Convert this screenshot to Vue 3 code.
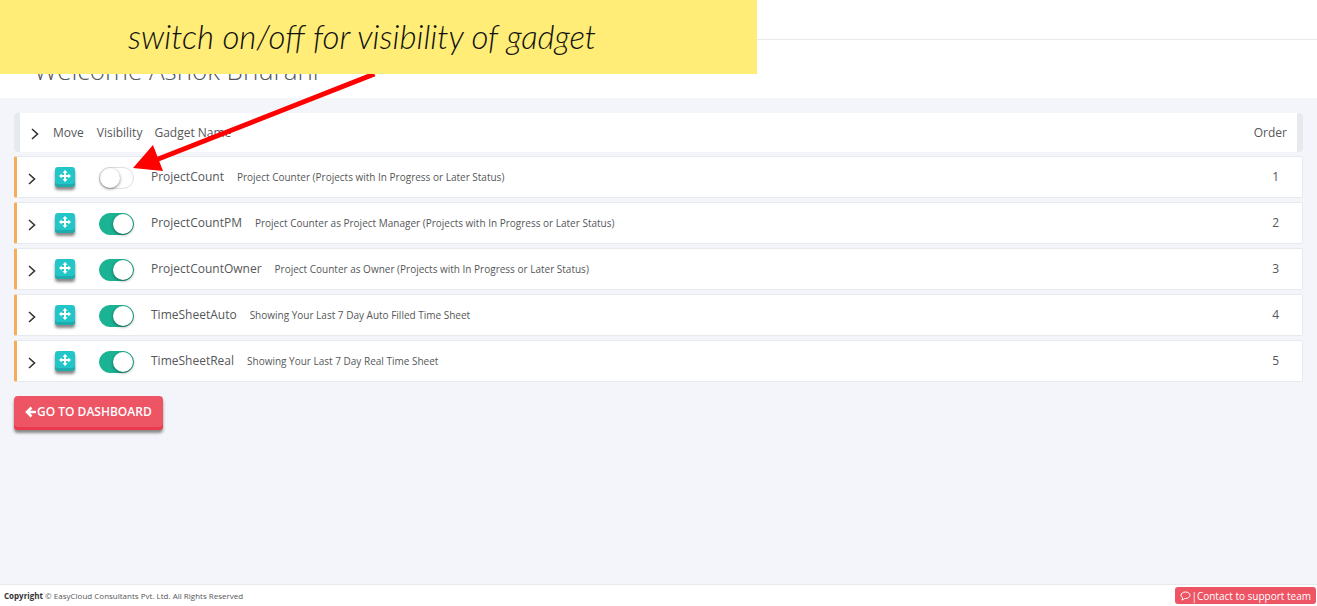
<script setup>
import { reactive } from 'vue'

const gadgets = reactive([
  { name: 'ProjectCount', about: 'Project Counter (Projects with In Progress or Later Status)', visible: false },
  { name: 'ProjectCountPM', about: 'Project Counter as Project Manager (Projects with In Progress or Later Status)', visible: true },
  { name: 'ProjectCountOwner', about: 'Project Counter as Owner (Projects with In Progress or Later Status)', visible: true },
  { name: 'TimeSheetAuto', about: 'Showing Your Last 7 Day Auto Filled Time Sheet', visible: true },
  { name: 'TimeSheetReal', about: 'Showing Your Last 7 Day Real Time Sheet', visible: true }
])
</script>

<template>
  <div class="page">
    <div class="topbar"></div>
    <header class="heading">
      <h1>Welcome Ashok Bhurani</h1>
    </header>

    <main class="content">
      <div class="list-head">
        <svg class="chevron" viewBox="0 0 8 12"><path d="M1 1l5.500 5L1 11" /></svg>
        <span class="h-move">Move</span>
        <span class="h-vis">Visibility</span>
        <span>Gadget Name</span>
        <span class="h-order">Order</span>
      </div>

      <ol class="list">
        <li v-for="(g, i) in gadgets" :key="g.name" class="row">
          <svg class="chevron" viewBox="0 0 8 12"><path d="M1 1l5.500 5L1 11" /></svg>
          <button class="move" type="button" :aria-label="'Move ' + g.name">
            <svg viewBox="0 0 12 12">
              <path d="M6 0l2.600 2.700H7v2.300h2.300V3.400L12 6 9.300 8.600V7H7v2.300h1.600L6 12 3.400 9.300H5V7H2.700v1.600L0 6l2.700-2.600V5H5V2.700H3.400z" />
            </svg>
          </button>
          <input v-model="g.visible" class="switch" type="checkbox" :aria-label="'Visibility of ' + g.name" />
          <span class="name">{{ g.name }}</span>
          <small class="about">{{ g.about }}</small>
          <span class="order">{{ i + 1 }}</span>
        </li>
      </ol>

      <button class="back" type="button">
        <svg viewBox="0 0 12 12"><path d="M6.500 1.500L2 6l4.500 4.500M2.500 6H11" /></svg>GO TO DASHBOARD
      </button>
    </main>

    <footer class="footer">
      <span><strong>Copyright</strong> © EasyCloud Consultants Pvt. Ltd. All Rights Reserved</span>
      <a class="support" href="#">
        <svg viewBox="0 0 11 10"><path d="M5.500 1C8 1 10 2.400 10 4.300S8 7.500 5.500 7.500L4.800 7.400C4 8.400 3 8.900 1.800 9c.6-.5.9-1.200.9-2.200C1.600 6.200 1 5.300 1 4.300 1 2.400 3 1 5.500 1z" /></svg>|Contact to support team
      </a>
    </footer>

    <div class="note">switch on/off for visibility of gadget</div>
    <svg class="arrow" viewBox="0 0 244 98">
      <path class="shaft" d="M241.500 0L24 85.500" />
      <path class="head" d="M0 94l20-23 10 26z" />
    </svg>
  </div>
</template>

<style>
body {
  background: #f3f5fa;
}
</style>

<style scoped>
.page {
  position: relative;
  display: flex;
  flex-direction: column;
  min-height: 100vh;
  background: #f3f5fa;
  color: #555759;
  font: 12px/20px "Open Sans", "Noto Sans", sans-serif;
}
.topbar {
  height: 39px;
  background: #fff;
  border-bottom: 1px solid #e7eaec;
}
.heading {
  padding: 14px 34px 12px;
  background: #fff;
}
h1 {
  margin: 0;
  font-size: 26px;
  line-height: 32px;
  font-weight: 300;
}
.content {
  flex: 1;
  padding: 15px 14px;
}
.list-head,
.row {
  display: flex;
  align-items: center;
  box-sizing: border-box;
  background: #fff;
}
.list-head {
  height: 39px;
  padding: 0 10px 0 11px;
  border: solid #e7eaec;
  border-width: 0 6px;
  border-radius: 4px;
}
.chevron {
  flex: none;
  width: 8px;
  height: 12px;
  margin-top: 3px;
  fill: none;
  stroke: #333;
  stroke-width: 1.6;
}
.h-move {
  margin-left: 14px;
}
.h-vis {
  margin: 0 12px 0 13px;
}
.h-order,
.order {
  margin-left: auto;
}
.list {
  display: grid;
  gap: 4px;
  margin: 4px 0 14px;
  padding: 0;
  list-style: none;
}
.row {
  height: 42px;
  padding: 0 23px 0 11px;
  border: 1px solid #e7eaec;
  border-left: 3px solid #f8ac59;
  border-radius: 2px;
}
.move {
  flex: none;
  display: flex;
  justify-content: center;
  width: 20px;
  height: 20px;
  margin: 0 24px 0 19px;
  padding: 3px 0;
  border: 0;
  border-radius: 3px;
  background: #23c6c8;
  box-shadow: inset 0 -3px #1eacae, 0 3px 3px #888;
}
.move svg {
  width: 12px;
  height: 12px;
  fill: #fff;
}
.switch {
  flex: none;
  appearance: none;
  display: flex;
  box-sizing: border-box;
  width: 35px;
  height: 22px;
  margin: 2px 17px 0 0;
  border: 1px solid #dfdfdf;
  border-radius: 20px;
  background: #fff;
}
.switch::before {
  content: "";
  width: 20px;
  height: 20px;
  border-radius: 50%;
  background: #fff;
  box-shadow: 0 1px 3px rgba(0, 0, 0, 0.5);
}
.switch:checked {
  justify-content: flex-end;
  border-color: #1ab394;
  background: #1ab394;
}
.about {
  margin-left: 13px;
  font-size: 10px;
}
.back {
  display: flex;
  align-items: center;
  height: 34px;
  padding: 0 11px 3px;
  border: 0;
  border-radius: 4px;
  background: #ed5565;
  box-shadow: inset 0 -3px #ea394c, 0 3px 3px #888;
  color: #fff;
  font: 600 12px/20px "Open Sans", sans-serif;
}
.back svg {
  width: 12px;
  height: 12px;
  fill: none;
  stroke: #fff;
  stroke-width: 2.6;
}
.footer {
  display: flex;
  align-items: center;
  justify-content: space-between;
  height: 21px;
  padding: 0 1px 0 4px;
  border-top: 1px solid #e7eaec;
  background: #fff;
  font-size: 8px;
}
.footer strong {
  color: #333;
}
.support {
  display: flex;
  align-items: center;
  height: 17px;
  padding: 0 5px;
  border-radius: 3px;
  background: #ed5565;
  color: #fff;
  font-size: 10px;
  font-weight: 500;
  text-decoration: none;
}
.support svg {
  width: 11px;
  height: 10px;
  fill: none;
  stroke: #fff;
}
.note {
  position: absolute;
  top: 0;
  left: 0;
  box-sizing: border-box;
  width: 757px;
  height: 74px;
  padding-left: 128px;
  background: #ffed77;
  color: #111;
  font: italic 300 33px/72px Lato, sans-serif;
  white-space: nowrap;
}
.arrow {
  position: absolute;
  top: 74px;
  left: 133px;
  width: 244px;
  height: 98px;
  pointer-events: none;
}
.shaft {
  stroke: #f00;
  stroke-width: 5;
}
.head {
  fill: #f00;
}
</style>
